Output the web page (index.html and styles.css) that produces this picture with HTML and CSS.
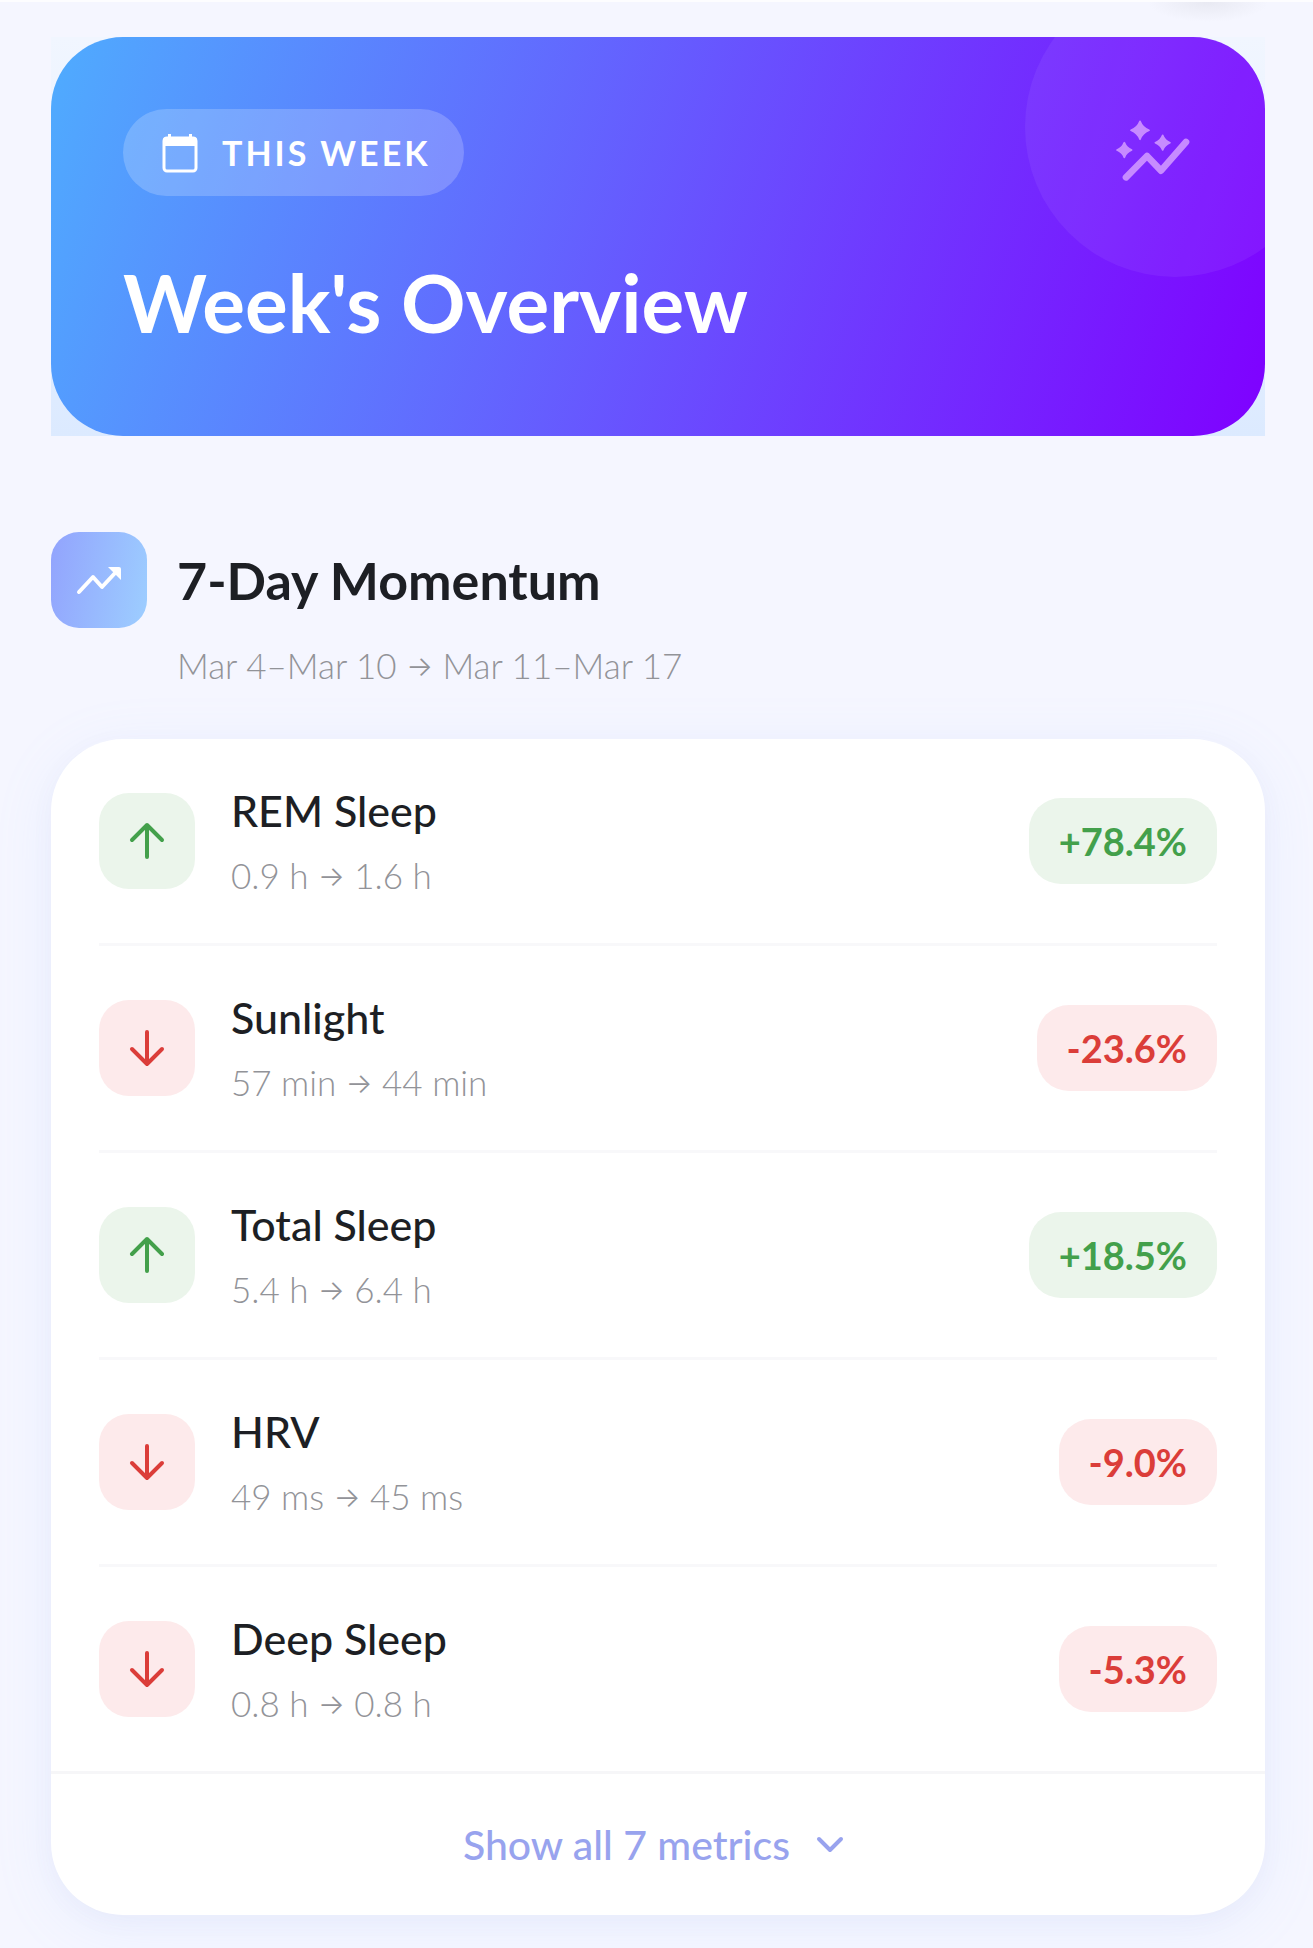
FILE: index.html
```html
<!DOCTYPE html>
<html lang="en">
<head>
<meta charset="utf-8">
<meta name="viewport" content="width=device-width, initial-scale=1">
<title>Week's Overview</title>
<link rel="stylesheet" href="styles.css">
</head>
<body>
<svg class="sprite" aria-hidden="true">
  <symbol id="arrow-up" viewBox="0 0 48 48"><path d="M24 40V8M9 23 24 8l15 15"/></symbol>
  <symbol id="arrow-down" viewBox="0 0 48 48"><path d="M24 8v32M9 25l15 15 15-15"/></symbol>
</svg>
<main class="page">
  <header class="hero-frame">
    <div class="hero">
      <div class="hero-circle"></div>
      <svg class="hero-icon" viewBox="66 39 240 240" aria-hidden="true">
        <path class="spark" d="M147 64q7 19 27 27-20 8-27 27-7-19-27-27 20-8 27-27zM100 128q6 16 22 22-16 6-22 22-6-16-22-22 16-6 22-22zM215 106q6 16 22 22-16 6-22 22-6-16-22-22 16-6 22-22z"/>
        <path class="trend" d="M105 232 168 168l42 44 75-86"/>
      </svg>
      <div class="chip">
        <svg class="chip-icon" viewBox="0 0 36 40" aria-hidden="true">
          <rect x="2" y="5" width="32" height="33" rx="3" fill="none" stroke="currentColor" stroke-width="3"/>
          <path fill="currentColor" d="M1 7q0-3 3-3h2V1h3v3h18V1h3v3h2q3 0 3 3v6H1z"/>
        </svg>
        <span>THIS WEEK</span>
      </div>
      <h1 class="hero-title">Week's Overview</h1>
    </div>
  </header>

  <section class="momentum">
    <div class="section-head">
      <div class="section-icon">
        <svg viewBox="0 0 48 36" aria-hidden="true">
          <path class="line" d="M4 30 18 15l9 10L41 10"/>
          <path class="head" d="M33 5h11q2 0 2 2v11z"/>
        </svg>
      </div>
      <h2 class="section-title">7-Day Momentum</h2>
      <p class="section-range">Mar 4–Mar 10 <span class="to">→</span> Mar 11–Mar 17</p>
    </div>

    <div class="card">
      <ul class="metrics">
        <li class="metric up">
          <div class="metric-icon"><svg aria-hidden="true"><use href="#arrow-up"/></svg></div>
          <div class="metric-text">
            <h3 class="metric-name">REM Sleep</h3>
            <p class="metric-change">0.9 h <span class="to">→</span> 1.6 h</p>
          </div>
          <span class="badge">+78.4%</span>
        </li>
        <li class="metric down">
          <div class="metric-icon"><svg aria-hidden="true"><use href="#arrow-down"/></svg></div>
          <div class="metric-text">
            <h3 class="metric-name">Sunlight</h3>
            <p class="metric-change">57 min <span class="to">→</span> 44 min</p>
          </div>
          <span class="badge">-23.6%</span>
        </li>
        <li class="metric up">
          <div class="metric-icon"><svg aria-hidden="true"><use href="#arrow-up"/></svg></div>
          <div class="metric-text">
            <h3 class="metric-name">Total Sleep</h3>
            <p class="metric-change">5.4 h <span class="to">→</span> 6.4 h</p>
          </div>
          <span class="badge">+18.5%</span>
        </li>
        <li class="metric down">
          <div class="metric-icon"><svg aria-hidden="true"><use href="#arrow-down"/></svg></div>
          <div class="metric-text">
            <h3 class="metric-name">HRV</h3>
            <p class="metric-change">49 ms <span class="to">→</span> 45 ms</p>
          </div>
          <span class="badge">-9.0%</span>
        </li>
        <li class="metric down">
          <div class="metric-icon"><svg aria-hidden="true"><use href="#arrow-down"/></svg></div>
          <div class="metric-text">
            <h3 class="metric-name">Deep Sleep</h3>
            <p class="metric-change">0.8 h <span class="to">→</span> 0.8 h</p>
          </div>
          <span class="badge">-5.3%</span>
        </li>
      </ul>
      <button class="show-all" type="button">
        <span>Show all 7 metrics</span>
        <svg viewBox="0 0 28 18" aria-hidden="true"><path d="M3 3l11 11L25 3"/></svg>
      </button>
    </div>
  </section>
</main>
</body>
</html>
```

FILE: styles.css
```css
* {
  box-sizing: border-box;
}

body {
  margin: 0;
  background: #f5f6ff;
  color: #1d1f24;
  font-family: Lato, Inter, sans-serif;
}

h1, h2, h3, p, ul {
  margin: 0;
  padding: 0;
}

.sprite {
  display: none;
}

.page {
  padding: 35px 48px 33px 51px;
  border-top: 2px solid #fdfdff;
  background: radial-gradient(ellipse 60px 20px at 92% 0, #e8e9f2, transparent) no-repeat;
}

/* Hero */
.hero-frame {
  background: linear-gradient(#f1f6ff, #dceaff);
}

.hero {
  position: relative;
  overflow: hidden;
  padding: 72px 72px 80px;
  border-radius: 72px;
  background: linear-gradient(108deg, #4facfe, #7f00ff);
  color: #fff;
}

.hero-circle {
  position: absolute;
  top: -60px;
  right: -60px;
  width: 300px;
  height: 300px;
  border-radius: 50%;
  background: rgba(255, 255, 255, 0.06);
}

.hero-icon {
  position: absolute;
  top: 76px;
  right: 72px;
  width: 80px;
  height: 80px;
  color: #c78bff;
}

.hero-icon .spark {
  fill: currentColor;
  stroke: currentColor;
  stroke-width: 5;
  stroke-linejoin: round;
}

.hero-icon .trend {
  fill: none;
  stroke: currentColor;
  stroke-width: 20;
  stroke-linecap: round;
  stroke-linejoin: round;
}

.chip {
  display: inline-flex;
  align-items: center;
  gap: 24px;
  height: 87px;
  padding: 0 33px 0 39px;
  border-radius: 44px;
  background: rgba(255, 255, 255, 0.2);
  font-size: 34px;
  font-weight: 700;
  letter-spacing: 3px;
}

.chip-icon {
  width: 36px;
  height: 40px;
}

.hero-title {
  margin-top: 52px;
  font-size: 80px;
  font-weight: 700;
  line-height: 108px;
}

/* Section heading */
.momentum {
  margin-top: 96px;
}

.section-head {
  display: grid;
  grid-template-columns: 96px 1fr;
  column-gap: 30px;
  align-items: center;
}

.section-icon {
  display: grid;
  place-items: center;
  height: 96px;
  border-radius: 28px;
  background: linear-gradient(100deg, #92a3fd, #9dceff);
}

.section-icon svg {
  width: 48px;
  height: 36px;
}

.section-icon .line {
  fill: none;
  stroke: #fff;
  stroke-width: 4;
  stroke-linecap: round;
  stroke-linejoin: round;
}

.section-icon .head {
  fill: #fff;
}

.section-title {
  font-size: 52px;
  font-weight: 700;
  line-height: 64px;
}

.section-range {
  grid-column: 2;
  margin-top: 13px;
}

.section-range,
.metric-change {
  color: #929398;
  font-size: 35px;
  font-weight: 300;
  line-height: 48px;
}

.to {
  font-family: Inter, sans-serif;
  font-size: 28px;
  line-height: 28px;
  vertical-align: 3px;
}

/* Metrics card */
.card {
  margin-top: 50px;
  border-radius: 72px;
  background: #fff;
  box-shadow: 0 12px 60px rgba(146, 190, 253, 0.12), 0 6px 24px rgba(120, 90, 160, 0.04);
}

.metrics {
  padding: 0 48px;
  list-style: none;
}

.metric {
  display: flex;
  align-items: center;
  gap: 36px;
  height: 207px;
  border-bottom: 3px solid #f8f8fa;
}

.metric:last-child {
  height: 204px;
  border-bottom: 0;
}

.metric-icon {
  display: grid;
  flex: none;
  place-items: center;
  width: 96px;
  height: 96px;
  border-radius: 30px;
}

.metric-icon svg {
  width: 48px;
  height: 48px;
  fill: none;
  stroke: currentColor;
  stroke-width: 4;
  stroke-linecap: round;
  stroke-linejoin: round;
}

.metric-text {
  flex: 1;
  padding-top: 2px;
}

.metric-name {
  margin-bottom: 14px;
  font-size: 43px;
  font-weight: 500;
  line-height: 52px;
}

.badge {
  padding: 19px 30px;
  border-radius: 32px;
  font-size: 38px;
  font-weight: 700;
  line-height: 48px;
}

.up .metric-icon,
.up .badge {
  background: #ebf5eb;
  color: #43a04b;
}

.down .metric-icon,
.down .badge {
  background: #fdeaeb;
  color: #db3d39;
}

.show-all {
  display: flex;
  align-items: center;
  justify-content: center;
  gap: 26px;
  width: 100%;
  height: 144px;
  padding: 0 9px 0 0;
  border: 0;
  border-top: 3px solid #f6f6f8;
  background: none;
  color: #98a3ee;
  font: 500 41px/48px Lato, Inter, sans-serif;
  cursor: pointer;
}

.show-all svg {
  width: 28px;
  height: 18px;
  fill: none;
  stroke: currentColor;
  stroke-width: 4;
  stroke-linecap: round;
  stroke-linejoin: round;
}
```
